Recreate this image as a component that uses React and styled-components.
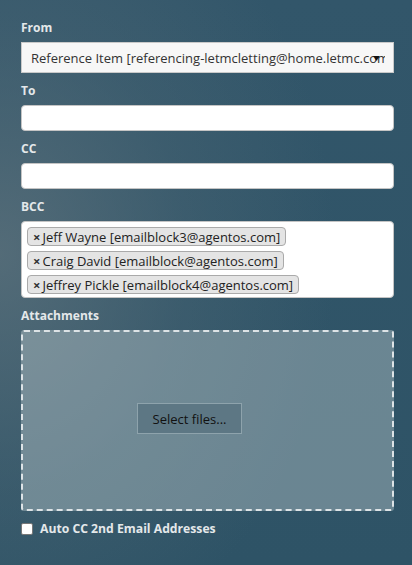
import React from "react";
import styled, { createGlobalStyle } from "styled-components";

const GlobalStyle = createGlobalStyle`
  html, body {
    margin: 0;
    padding: 0;
    height: 100%;
  }
  body {
    font-family: "Open Sans", "Noto Sans", sans-serif;
    background: #2f5366;
  }
`;

const bccList = [
  "Jeff Wayne [emailblock3@agentos.com]",
  "Craig David [emailblock@agentos.com]",
  "Jeffrey Pickle [emailblock4@agentos.com]",
];

const App = () => {
  return (
    <>
      <GlobalStyle />
      <Page>
        <Field>
          <Label>From</Label>
          <SelectBox>
            <SelectText>
              Reference Item [referencing-letmcletting@home.letmc.com]
            </SelectText>
            <Caret>▼</Caret>
          </SelectBox>
        </Field>
        <Field>
          <Label>To</Label>
          <TextBox />
        </Field>
        <Field>
          <Label>CC</Label>
          <TextBox />
        </Field>
        <Field>
          <Label>BCC</Label>
          <TagBox>
            {bccList.map((item) => (
              <Tag key={item}>
                <TagRemove>×</TagRemove>
                {item}
              </Tag>
            ))}
          </TagBox>
        </Field>
        <Field>
          <Label>Attachments</Label>
          <DropZone>
            <SelectButton>Select files...</SelectButton>
          </DropZone>
        </Field>
        <CheckRow>
          <CheckBox />
          <CheckLabel>Auto CC 2nd Email Addresses</CheckLabel>
        </CheckRow>
      </Page>
    </>
  );
};

const Page = styled.div`
  box-sizing: border-box;
  width: 412px;
  height: 565px;
  padding: 19px 18px 0 21px;
  background: radial-gradient(
      ellipse 420px 520px at 0% 45%,
      rgba(95, 115, 125, 0.75) 0%,
      rgba(80, 105, 118, 0.35) 45%,
      rgba(47, 83, 102, 0) 80%
    ),
    linear-gradient(180deg, #32566a 0%, #2e5366 100%);
`;

const Field = styled.div`
  display: flex;
  flex-direction: column;
  margin-bottom: 9px;
`;

const Label = styled.div`
  color: #e4e8ea;
  font-size: 12px;
  font-weight: 700;
  line-height: 18px;
  margin-bottom: 5px;
`;

const SelectBox = styled.div`
  position: relative;
  box-sizing: border-box;
  height: 31px;
  background: #f7f7f7;
  border: 1px solid #c9c9c9;
  display: flex;
  align-items: center;
  padding: 0 8px 0 9px;
  overflow: hidden;
`;

const SelectText = styled.span`
  color: #333;
  font-size: 13px;
  white-space: nowrap;
  overflow: hidden;
`;

const Caret = styled.span`
  position: absolute;
  right: 11px;
  top: 8px;
  font-size: 11px;
  line-height: 14px;
  color: #111;
  transform: scaleY(0.8);
`;

const TextBox = styled.div`
  box-sizing: border-box;
  height: 26px;
  background: #fff;
  border: 1px solid #c4c4c4;
  border-radius: 4px;
`;

const TagBox = styled.div`
  box-sizing: border-box;
  height: 77px;
  background: #fff;
  border: 1px solid #c4c4c4;
  border-radius: 4px;
  padding: 5px 5px 0;
  display: flex;
  flex-direction: column;
  align-items: flex-start;
  gap: 5px;
`;

const Tag = styled.div`
  box-sizing: border-box;
  height: 19px;
  display: flex;
  align-items: center;
  background: #e4e4e4;
  border: 1px solid #aaa;
  border-radius: 4px;
  padding: 0 5px;
  color: #222;
  font-size: 13px;
  white-space: nowrap;
`;

const TagRemove = styled.span`
  font-weight: 700;
  font-size: 13px;
  margin-right: 2px;
  color: #333;
`;

const DropZone = styled.div`
  box-sizing: border-box;
  height: 181px;
  border: 2px dashed #dde3e6;
  border-radius: 3px;
  background: rgba(180, 195, 200, 0.45);
  display: flex;
  align-items: center;
  justify-content: center;
  padding-right: 36px;
  padding-bottom: 4px;
`;

const SelectButton = styled.div`
  box-sizing: border-box;
  width: 105px;
  height: 31px;
  display: flex;
  align-items: center;
  justify-content: center;
  background: #5d7784;
  border: 1px solid #8ea3ac;
  color: #111;
  font-size: 13px;
`;

const CheckRow = styled.div`
  display: flex;
  align-items: center;
  gap: 7px;
  margin-top: 2px;
`;

const CheckBox = styled.div`
  box-sizing: border-box;
  width: 12px;
  height: 12px;
  background: #fff;
  border: 1px solid #777;
  border-radius: 2px;
`;

const CheckLabel = styled.span`
  color: #e4e8ea;
  font-size: 12.2px;
  font-weight: 700;
`;

export default App;
